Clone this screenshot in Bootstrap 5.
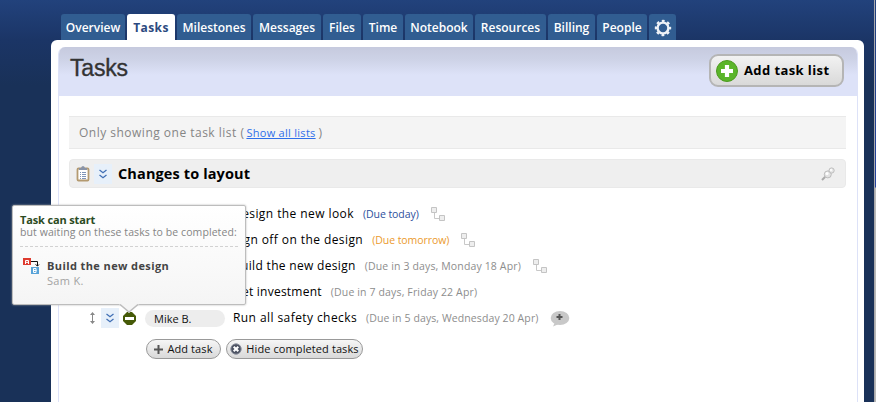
<!DOCTYPE html>
<html lang="en">
<head>
<meta charset="utf-8">
<title>Tasks</title>
<link href="https://cdn.jsdelivr.net/npm/bootstrap@5.3.0/dist/css/bootstrap.min.css" rel="stylesheet">
<style>
body{width:876px;height:402px;overflow:hidden;font-family:"Open Sans","Noto Sans",sans-serif;font-size:12px;line-height:16px;color:#111;background:linear-gradient(#22427c 0,#1b3566 40px,#193158 85px);position:relative}
svg{display:block;flex:none}
.edge{position:absolute;right:0;top:0;width:2px;height:402px;border-left:1px solid #aaa9ab;background:linear-gradient(#21407c 0,#2242a0 187px,#b9b9b9 188px)}
.tabs{padding:14px 0 0 61px;height:40px;gap:2px}
.tabs .nav-link{height:26px;padding:1px 0 0;display:flex;align-items:center;justify-content:center;color:#fff;background:#315d91;border-radius:3px 3px 0 0;font-weight:600;white-space:nowrap}
.tabs .nav-link.active{background:#fff;color:#2c4a80;font-weight:700;letter-spacing:.4px}
.w64{width:64px}.w48{width:48px}.w74{width:74px}.w68{width:68px}.w38{width:38px}.w40{width:40px}.w71{width:71px}.w47{width:47px}.w50{width:50px}.w27{width:27px}
.panel{margin-left:51px;width:813px;height:362px;background:#fff;border-radius:6px 6px 0 0;padding:7px 6px 0 7px}
.inner{height:355px;border:1px solid #dde2f8;border-width:0 1px;border-radius:7px 7px 0 0;overflow:hidden}
.head{height:49px;background:linear-gradient(#c6cade 0,#cdd2e6 12px,#dde2f8 28px);padding:0 13px 0 11px}
.head h1{font:23px/28px "Liberation Sans",Arial,sans-serif;color:#333;margin:-7px 0 0;letter-spacing:-.2px;-webkit-text-stroke:.35px #333}
.btn-big{width:135px;height:33px;border:2px solid #b5b5b5;border-radius:9px;background:linear-gradient(#f2f2f2,#d9d9d9);padding:1px 0 0 5px;font-weight:700;font-size:13px;color:#000;gap:6px;margin-top:-3px;letter-spacing:.4px}
.notice{margin:20px 11px 0 10px;height:33px;background:#f4f4f4;border:1px solid #e9e9e9;border-width:1px 0;padding-left:10px;color:#858585}
.notice .lead-in{letter-spacing:.49px}
.notice a{color:#2f6fea;font-size:11px;letter-spacing:.28px;margin:0 3px 0 2px}
.listhead{margin:10px 11px 0 10px;height:29px;background:#efefef;border:1px solid #e9e9e9;border-radius:4px;padding:0 10px 0 6px}
.listhead h2{font-size:14.5px;font-weight:700;margin:0 0 0 6px;color:#000;letter-spacing:.12px}
.chev{width:18px;height:20px;background:#e7f0fa}
.rows{padding:13px 0 0 28px}
.task{height:26px;padding-left:146px}
.task.open{padding-left:0}
.name{letter-spacing:.32px;white-space:nowrap;color:#000}
.name.wide{letter-spacing:.42px}
.name.tight{letter-spacing:.24px}
.who{width:80px;height:17px;border-radius:9px;background:#ededed;padding-left:9px;font-size:11px;line-height:17px;margin:0 8px 0 9px}
.due{font-size:10.5px;color:#8d8d8d;margin:0 12px 0 9px;white-space:nowrap;letter-spacing:.14px}
.due.long{letter-spacing:.1px}
.due.today,.due.tomorrow{letter-spacing:-.06px}
.due.today{color:#2d4f9c}
.due.tomorrow{color:#eb9a2d}
.acts{gap:5px;padding:8px 0 0 59px}
.acts .btn{height:20px;border:1px solid #999;border-radius:10px;background:linear-gradient(#f6f6f6,#d9d9d9);font-size:11px;line-height:16px;padding:0;color:#111;gap:4px;white-space:nowrap;letter-spacing:.1px}
.add{width:75px}
.hide{width:137px}
.tip{position:absolute;left:12px;top:205px;width:234px;height:100px;background:linear-gradient(#fff,#f5f5f5);border:1px solid #bdbdbd;border-radius:2px;padding:7px 7px 0;font-size:11px;line-height:12px;box-shadow:0 0 2px #aaa}
.tip .start{color:#2b4a22;font-weight:700;line-height:14px;letter-spacing:-.15px}
.tip .sub{color:#858585;font-size:10.5px;border-bottom:1px dashed #d2d2d2;height:20px;line-height:11px;white-space:nowrap;letter-spacing:.09px}
.tip .dep{padding:11px 0 0 3px;gap:7px;line-height:15px}
.tip .dep b{color:#444;letter-spacing:.4px}
.tip .dep span{color:#a3a3a3;letter-spacing:.3px}
.arrow{position:absolute;left:106px;top:98px}
</style>
</head>
<body>
<nav class="nav tabs flex-nowrap">
<a class="nav-link w64">Overview</a>
<a class="nav-link active w48">Tasks</a>
<a class="nav-link w74">Milestones</a>
<a class="nav-link w68">Messages</a>
<a class="nav-link w38">Files</a>
<a class="nav-link w40">Time</a>
<a class="nav-link w68">Notebook</a>
<a class="nav-link w71">Resources</a>
<a class="nav-link w47">Billing</a>
<a class="nav-link w50">People</a>
<a class="nav-link w27"><svg width="18" height="18" viewBox="-9 -9 18 18"><circle r="5.4" fill="none" stroke="#eef2f7" stroke-width="2.4"/><circle r="7.1" fill="none" stroke="#eef2f7" stroke-width="2.2" stroke-dasharray="2.8 2.776" stroke-dashoffset="1.4"/></svg></a>
</nav>
<main class="panel"><div class="inner">
<header class="head d-flex align-items-center justify-content-between"><h1>Tasks</h1>
<button class="btn btn-big d-flex align-items-center"><svg width="22" height="22" viewBox="0 0 22 22"><circle cx="11" cy="11" r="10.5" fill="#5bb52a" stroke="#4d9a20"/><path d="M11 5v12M5 11h12" stroke="#fff" stroke-width="4.2"/></svg><span>Add task list</span></button></header>
<div class="notice d-flex align-items-center"><span class="lead-in">Only showing one task list (</span><a href="#">Show all lists</a><span>)</span></div>
<section class="listhead d-flex align-items-center">
<svg width="14" height="16" viewBox="0 0 14 16"><rect x="1.5" y="2.5" width="11" height="12" rx="1" fill="#fff" stroke="#b49a70" stroke-width="1.8"/><path d="M3 4V2h2l1-1.8h2L9 2h2v2z" fill="#8993a6"/><path d="M4 6.5h1M6 6.5h4M4 8.5h1M6 8.5h4M4 10.5h1M6 10.5h4M4 12.5h1M6 12.5h4" stroke="#7188b0" stroke-width=".9"/></svg>
<div class="chev d-flex align-items-center justify-content-center ms-1"><svg width="8" height="10" viewBox="0 0 8 10"><path d="M.5 1 4 3.7 7.5 1M.5 6 4 8.7 7.5 6" fill="none" stroke="#416fb5" stroke-width="1.3"/></svg></div>
<h2 class="flex-fill">Changes to layout</h2>
<svg width="14" height="14" viewBox="0 0 14 14"><path d="M1 13l4-4" stroke="#aaa" stroke-width="2"/><path d="M6 5l4-3 2 2-3 4z" fill="#d0d0d0"/><circle cx="6.8" cy="7.4" r="3.5" fill="#e2e2e2" stroke="#bcbcbc"/><circle cx="10.6" cy="3.5" r="2.6" fill="#e6e6e6" stroke="#bcbcbc"/><circle cx="6" cy="6.5" r="1.5" fill="#fff"/><circle cx="10" cy="3" r="1.1" fill="#fff"/></svg>
</section>
<div class="rows">
<div class="task d-flex align-items-center"><span class="name wide">Design the new look</span><span class="due today">(Due today)</span><svg width="14" height="14" viewBox="0 0 14 14"><path d="M3.5 6v5.5H8" fill="none" stroke="#c8c8c8"/><path d="M.5 .5h5v5h-5zM8.5 8.5h5v5h-5z" fill="#eee" stroke="#c4c4c4"/></svg></div>
<div class="task d-flex align-items-center"><span class="name wide">Sign off on the design</span><span class="due tomorrow">(Due tomorrow)</span><svg width="14" height="14" viewBox="0 0 14 14"><path d="M3.5 6v5.5H8" fill="none" stroke="#c8c8c8"/><path d="M.5 .5h5v5h-5zM8.5 8.5h5v5h-5z" fill="#eee" stroke="#c4c4c4"/></svg></div>
<div class="task d-flex align-items-center"><span class="name">Build the new design</span><span class="due">(Due in 3 days, Monday 18 Apr)</span><svg width="14" height="14" viewBox="0 0 14 14"><path d="M3.5 6v5.5H8" fill="none" stroke="#c8c8c8"/><path d="M.5 .5h5v5h-5zM8.5 8.5h5v5h-5z" fill="#eee" stroke="#c4c4c4"/></svg></div>
<div class="task d-flex align-items-center"><span class="name tight">Get investment</span><span class="due">(Due in 7 days, Friday 22 Apr)</span></div>
<div class="task open d-flex align-items-center">
<svg width="10" height="12" viewBox="0 0 10 12"><path d="M5.500 1v10" stroke="#888"/><path d="M5.500 0L8 3H3zM5.500 12L8 9H3z" fill="#888"/></svg>
<div class="chev d-flex align-items-center justify-content-center ms-1 me-1"><svg width="8" height="10" viewBox="0 0 8 10"><path d="M.5 1 4 3.7 7.5 1M.5 6 4 8.7 7.5 6" fill="none" stroke="#416fb5" stroke-width="1.3"/></svg></div>
<svg width="13" height="13" viewBox="0 0 13 13"><path d="M4 0h5l4 4v5l-4 4H4L0 9V4z" fill="#465a08"/><path d="M2 5h9v3H2z" fill="#fff"/></svg>
<div class="who">Mike B.</div><span class="name wide">Run all safety checks</span><span class="due long">(Due in 5 days, Wednesday 20 Apr)</span>
<svg width="20" height="18" viewBox="0 0 20 18"><ellipse cx="10" cy="9" rx="9.300" ry="7" fill="#c8c8c8"/><path d="M5 13l-2 4.500 7-3z" fill="#c8c8c8"/><path d="M9.500 5v6M6.500 8h6" stroke="#555" stroke-width="2"/></svg></div>
<div class="acts d-flex">
<button class="btn add d-flex align-items-center justify-content-center"><svg width="9" height="9" viewBox="0 0 9 9"><path d="M4.500 0v9M0 4.500h9" stroke="#555" stroke-width="2"/></svg>Add task</button>
<button class="btn hide d-flex align-items-center justify-content-center"><svg width="12" height="12" viewBox="0 0 12 12"><circle cx="6" cy="6" r="5.200" fill="#4c5262" stroke="#8a8f9c"/><path d="M3.700 3.700l4.600 4.600M8.300 3.700L3.700 8.300" stroke="#fff" stroke-width="2"/></svg>Hide completed tasks</button>
</div>
</div>
</div></main>
<aside class="tip">
<div class="start">Task can start</div>
<div class="sub">but waiting on these tasks to be completed:</div>
<div class="dep d-flex"><svg width="17" height="17" viewBox="0 0 17 17"><path d="M0 0h8v7H0z" fill="#de3b2f"/><path d="M8 9h8v7H8z" fill="#58a3d8"/><path d="M8 3.500h6.500V8M12.500 6.500l2 1.500 1.500-1.500" fill="none" stroke="#111"/><path d="M2.500 6V2.500h3V6M2.500 4.300h3M10.500 10.500h2.500v4h-2.500zM10.500 12.500h3" fill="none" stroke="#fff"/></svg>
<div class="d-flex flex-column"><b>Build the new design</b><span>Sam K.</span></div></div>
<svg class="arrow" width="20" height="9" viewBox="0 0 20 9"><path d="M0 0h20l-10 9z" fill="#f5f5f5"/><path d="M1 .5l9 7.500 9-7.500" fill="none" stroke="#bdbdbd" stroke-width="1.500"/></svg>
</aside>
<div class="edge"></div>
<script src="https://cdn.jsdelivr.net/npm/bootstrap@5.3.0/dist/js/bootstrap.bundle.min.js"></script>
</body>
</html>
